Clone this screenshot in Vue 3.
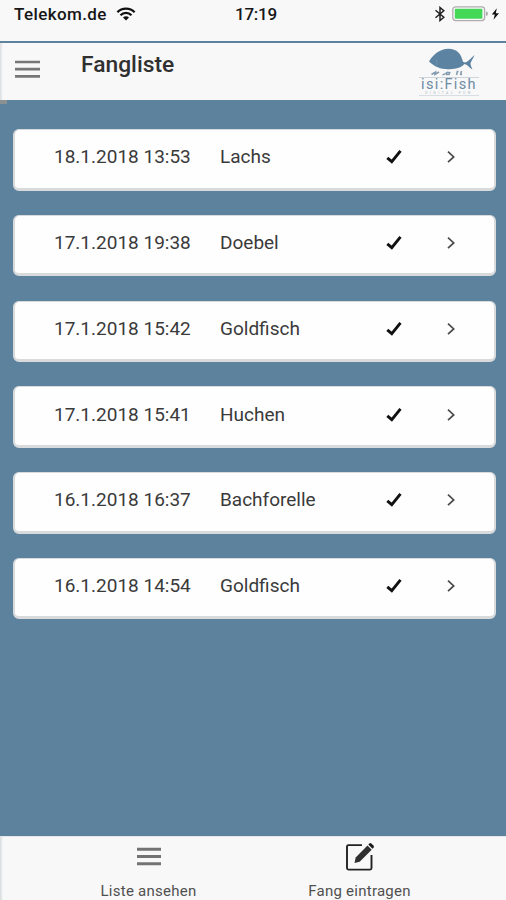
<script setup>
const catches = [
  { date: '18.1.2018 13:53', fish: 'Lachs' },
  { date: '17.1.2018 19:38', fish: 'Doebel' },
  { date: '17.1.2018 15:42', fish: 'Goldfisch' },
  { date: '17.1.2018 15:41', fish: 'Huchen' },
  { date: '16.1.2018 16:37', fish: 'Bachforelle' },
  { date: '16.1.2018 14:54', fish: 'Goldfisch' },
]
</script>

<template>
  <div class="screen">
    <div class="status">
      <span class="carrier">Telekom.de</span>
      <svg class="wifi" width="20" height="14" viewBox="0 0 20 14" fill="none" stroke="#111" stroke-width="2.3">
        <path d="M1.4 5.2C6 .3 14 .3 18.600 5.200M4.500 8.200c3.100-3.200 7.900-3.200 11 0" />
        <path d="M10 13.400 7 10.400c1.700-1.600 4.300-1.600 6 0z" fill="#111" stroke="none" />
      </svg>
      <span class="time">17:19</span>
      <svg class="bluetooth" width="12" height="16" viewBox="0 0 12 16" fill="none" stroke="#222" stroke-width="1.5">
        <path d="M1.500 4.300 9.800 11.300 6 14.500v-13L9.800 4.700 1.500 11.700" />
      </svg>
      <svg class="battery" width="50" height="16" viewBox="0 0 50 16">
        <rect x=".8" y=".8" width="31.800" height="13.800" rx="2.800" fill="#f8f8f8" stroke="#b0acb0" stroke-width="1.300" />
        <rect x="2.800" y="2.700" width="27.600" height="10" rx="1" fill="#43d957" />
        <path d="M34 5.500q2 .3 2 2.200t-2 2.200z" fill="#a9a9a9" />
        <path d="M44.800 2.200 39.800 8.400h3l-1.300 5.400 5.500-6.600h-3.200z" fill="#111" />
      </svg>
    </div>

    <header class="header">
      <svg class="menu" width="25" height="19" viewBox="0 0 25 19" stroke="#777" stroke-width="2.700">
        <path d="M0 2h25M0 9.200h25M0 16.400h25" />
      </svg>
      <h1>Fangliste</h1>
      <div class="logo">
        <svg width="60" height="29" viewBox="0 0 60 29">
          <path d="M10 13.500C14 7 20 1 29.500.8c8.500 0 12.500 5 14.500 13 1.500.9 2.500.9 3.500.2 2.500-1.500 5-4.500 8-7-1.300 3.500-3.200 5.800-4 8.200 0 2 1 4 2 6.300-3-1.500-4.500-4.500-8-5.500-2.500 3-6.500 4.500-12.500 5C24 22 16 19.500 10 13.500z" fill="#5c83a1" />
          <path d="M17 11.500q2.200 3 .5 5.500" fill="none" stroke="#7799b2" stroke-width=".7" />
          <path d="m12.500 26.500 4-2.500-.5 2.500 4-2.500M23.500 27q3-1 5-2.700l3 .4M27 26.500l4-.3M38.500 23l-1 4M42.500 23l-1 4M38 23.500h1.500M41.500 26.500h1.500" fill="none" stroke="#8299ae" stroke-width="1.500" />
        </svg>
        <div class="brand">isi:Fish</div>
        <div class="tagline">DIGITAL FUN</div>
      </div>
      <i class="corner"></i>
    </header>

    <main class="list">
      <div v-for="item in catches" :key="item.date" class="card">
        <span class="date">{{ item.date }}</span>
        <span class="fish">{{ item.fish }}</span>
        <svg class="check" width="16" height="16" viewBox="0 0 16 16" fill="none" stroke="#111" stroke-width="2.900">
          <path d="M1.300 8.800 5.800 12.700 14.500 1.900" />
        </svg>
        <svg class="chevron" width="9" height="14" viewBox="0 0 9 14" fill="none" stroke="#4a4a4a" stroke-width="1.700">
          <path d="M1 1.600 6.700 6.900 1 12.200" />
        </svg>
      </div>
    </main>

    <footer class="tabs">
      <div class="tab">
        <svg class="tab-icon" width="24" height="32" viewBox="0 0 24 32" stroke="#737373" stroke-width="2.900">
          <path d="M0 8.300h24M0 15.500h24M0 22.700h24" />
        </svg>
        <span>Liste ansehen</span>
      </div>
      <div class="tab">
        <svg class="tab-icon" width="30" height="32" viewBox="0 0 30 32">
          <path d="M17 4.100H3.500q-1.500 0-1.500 1.500v21.500q0 1.500 1.500 1.500h21.500q1.500 0 1.500-1.500V14" fill="none" stroke="#222" stroke-width="1.900" />
          <path d="m9.500 22 1.200-5.500L22.500 4.500l4.200 4.200L14.700 20.700z" fill="#303030" />
          <path d="m23.300 3.600 1-1q1.100-1 2.300.1l1.800 1.800q1.100 1.200.1 2.300l-1 1z" fill="#191919" />
        </svg>
        <span>Fang eintragen</span>
      </div>
    </footer>
  </div>
</template>

<style>
body { margin: 0; overflow: hidden; }
</style>

<style scoped>
.screen {
  width: 506px;
  height: 900px;
  display: flex;
  flex-direction: column;
  background: #5d829e;
  font-family: Roboto, sans-serif;
  color: #3a3a3a;
  overflow: hidden;
}
.status {
  box-sizing: border-box;
  height: 41px;
  padding: 6px 4px 0 14px;
  display: flex;
  align-items: flex-start;
  background: #f8f8f8;
  color: #171717;
  font: 500 17px/17px Roboto, sans-serif;
}
.carrier { width: 102px; letter-spacing: .4px; }
.wifi { margin-top: 1px; }
.time { margin-left: 99px; width: 199px; letter-spacing: -.25px; }
.battery { margin-left: 6px; }
.header {
  position: relative;
  box-sizing: border-box;
  height: 59px;
  flex: none;
  padding-left: 15px;
  display: flex;
  border-top: 2px solid #5d829e;
  background: linear-gradient(90deg, #d9dde1, #f8f8f8 3px);
}
.menu { margin-top: 17px; }
h1 {
  margin: 8px 0 0 41px;
  width: 338px;
  color: #303030;
  font: 500 22.800px/27px Roboto, sans-serif;
}
.logo { width: 60px; padding-top: 5px; color: #6d8ba5; }
.logo svg { display: block; }
.brand {
  border-top: 1px solid #cdd4da;
  font: 14.500px/13px Roboto, sans-serif;
  letter-spacing: 1.350px;
  text-align: center;
  white-space: nowrap;
}
.tagline {
  border-bottom: 1px solid #d9dee2;
  font: 3.500px/4px Roboto, sans-serif;
  letter-spacing: 2.500px;
  text-align: center;
  white-space: nowrap;
  color: #a9bac8;
}
.corner {
  position: absolute;
  left: 0;
  bottom: -4px;
  width: 7px;
  height: 4px;
  background: #8b9093;
}
.list {
  flex: 1;
  padding: 29px 10px 0 13px;
  display: flex;
  flex-direction: column;
  gap: 24.300px;
}
.card {
  box-sizing: border-box;
  height: 61.500px;
  flex: none;
  padding: 0 38px 3px 39px;
  display: grid;
  grid-template-columns: 166px 166px 61px 9px;
  align-items: center;
  border: solid #d9dadb;
  border-width: 1px 2px 3px;
  border-radius: 6px;
  background: #fefefe;
}
.date, .fish { font-size: 19px; line-height: 22px; white-space: nowrap; }
.tabs {
  height: 64px;
  flex: none;
  display: grid;
  grid-template-columns: 211px 211px;
  padding-left: 43px;
  background: linear-gradient(90deg, #d5d9dd, #f8f8f8 3px);
  box-shadow: inset 0 1px #e3e6e9;
}
.tab {
  display: flex;
  flex-direction: column;
  align-items: center;
  padding-top: 5px;
  font-size: 15px;
  line-height: 18px;
  letter-spacing: .25px;
  color: #505050;
}
.tab-icon { margin-bottom: 9px; flex: none; }
</style>
